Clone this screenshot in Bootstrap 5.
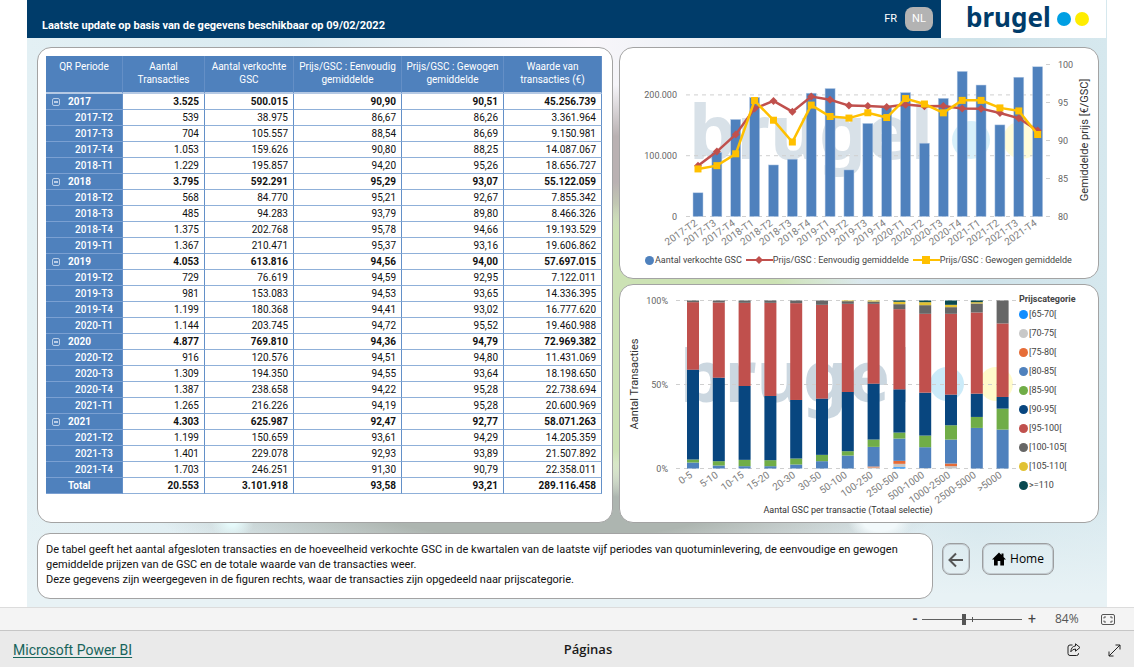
<!DOCTYPE html>
<html lang="nl">
<head>
<meta charset="utf-8">
<meta name="viewport" content="width=device-width, initial-scale=1">
<title>Brugel - GSC transacties</title>
<link rel="stylesheet" href="https://cdn.jsdelivr.net/npm/bootstrap@5.3.0/dist/css/bootstrap.min.css">
<style>
  :root { --navy: #003c6a; --steel: #4f81bd; --edge: #a3a3a3; }
  body { font-family: Roboto, "Open Sans", sans-serif; font-size: 10px; color: #222; background: #fff; }
  .report {
    margin: 0 27px;
    background:
      radial-gradient(ellipse 3% 3% at 79% 86%, #f2f9fb 50%, transparent 100%),
      radial-gradient(ellipse 2% 3% at 19% 86%, #e6fafb 20%, transparent 100%),
      radial-gradient(ellipse 24% 26% at 55% 56%, #cce2b4 70%, transparent 100%),
      radial-gradient(ellipse 12% 14% at 55% 28%, #b9b1b2 40%, transparent 100%),
      radial-gradient(ellipse 36% 9% at 48% 85%, #adb5b0 40%, transparent 100%),
      linear-gradient(to bottom, transparent 80%, #e8f2f5 98%),
      linear-gradient(to right, #e3f0f4, #d9eaf0 25%, #f8f6fa 52%, #cfe3ea 88%, #d6e8ee);
  }
  .topbar { background: var(--navy); height: 38px; padding-left: 15px; }
  .topbar h1 { font-size: 11px; line-height: 14px; margin: 14px 0 0; font-weight: 700; color: #fff; }
  .lang { color: #fff; font-size: 11px; line-height: 14px; text-decoration: none; }
  .lang-on { border: 0; background: #b3b3b3; color: #fff; font-size: 11px; line-height: 14px; border-radius: 8px; width: 28px; height: 24px; padding: 0; margin: 0 8px; }
  .brand-cell { width: 165px; height: 38px; background: #fff; margin-right: 1px; }
  .brand-cell svg { display: block; margin-left: 25px; overflow: visible; }
  .wordmark { font-family: "Noto Sans", sans-serif; font-weight: 700; fill: var(--navy); }
  .area { padding: 9px 8px 8px 10px; }
  .panels { display: grid; grid-template-columns: 6fr 5fr; gap: 6px; }
  .charts { display: flex; flex-direction: column; gap: 5px; min-width: 0; }
  .panel { background: #fff; border: 1px solid var(--edge); border-radius: 14px; }
  .panel svg { display: block; width: 100%; height: auto; }
  .table-panel { padding: 8px 10px 8px 8px; }

  .periods { width: 100%; table-layout: fixed; border-collapse: separate; border-spacing: 0; color: #111; }
  .periods th, .periods td { line-height: 15px; padding: 0 5px 0 0; text-align: right; border-bottom: 1px solid #8fb0d9; border-right: 1px solid #6390c8; white-space: nowrap; }
  .periods thead th { background: var(--steel); color: #fff; font-weight: 400; line-height: 13px; height: 38px; padding: 4px 0 0; text-align: center; vertical-align: top; border-right-color: #648fc6; border-bottom: 2px solid #b5c9e4; }
  .periods tbody th { background: var(--steel); color: #fff; font-weight: 500; padding-right: 9px; border-bottom-color: #7ba0d2; }
  .periods .year th, .periods .year td { font-weight: 700; }
  .periods .year th { text-align: left; padding-left: 6px; }
  .periods .total th { padding-left: 22px; }
  .fold { border: 1px solid #b9cde8; border-radius: 2px; background: transparent; width: 8px; height: 8px; padding: 0; margin-right: 8px; vertical-align: 0; position: relative; }
  .fold::after { content: ""; position: absolute; left: 1px; right: 1px; top: 2px; height: 2px; background: #b9cde8; }

  .tick { font-size: 9px; fill: #666; }
  .cat { font-size: 10px; fill: #7d7d7d; }
  .axis { font-size: 11px; fill: #333; }
  .axis-s { font-size: 9px; fill: #333; }
  .grid-line { stroke: #cfcfcf; stroke-dasharray: 4 4; }
  .key { font-size: 9px; line-height: 12px; color: #444; }
  .key svg { width: auto; flex: none; }
  .key-row { height: 24px; margin-bottom: 6px; padding-left: 25px; }
  .side-key { flex: 0 0 79px; padding-top: 8px; }
  .side-key h2 { font-size: 9px; line-height: 12px; font-weight: 700; color: #444; margin: 0; }
  .side-key li { line-height: 19px; }
  .dot { width: 9px; height: 9px; border-radius: 50%; margin-right: 1px; flex: none; }

  .note { font-size: 11px; line-height: 15px; color: #111; padding: 8px 8px 11px; border-radius: 13px; }
  .note p { margin: 0; }
  .bottom-row { margin-top: 10px; }
  .nav-btns { margin: 10px 45px 0 9px; gap: 12px; }
  .ghost { border: 1px solid #9c9ea0; box-shadow: inset 0 0 0 1px #c3cbd0; background: transparent; border-radius: 8px; height: 32px; padding: 0; font-family: "Open Sans", sans-serif; font-size: 12px; color: #000; }
  .back { width: 28px; } .home { width: 72px; }

  .zoombar { height: 24px; background: #f4f4f4; border-top: 1px solid #dcdcdc; border-bottom: 1px solid #c6c6c6; padding-right: 19px; color: #555; }
  .zoombar button { border: 0; background: none; padding: 0; width: 10px; font-size: 14px; line-height: 20px; color: #444; }
  .zoom-track { position: relative; width: 100px; height: 14px; margin: 0 5px 0 2px; }
  .zoom-track::after { content: ""; position: absolute; left: 50px; top: 5px; width: 1px; height: 5px; background: #555; }
  .zoom-track input { -webkit-appearance: none; appearance: none; display: block; width: 100%; height: 14px; margin: 0; background: linear-gradient(#606060, #606060) center / 100% 1px no-repeat; }
  .zoom-track input::-webkit-slider-thumb { -webkit-appearance: none; width: 4px; height: 11px; background: #555; border: 0; border-radius: 0; }
  .pct { font-family: "Open Sans", sans-serif; font-size: 12px; width: 23px; margin: 0 23px 0 18px; }
  .zoombar .fit { width: 14px; }
  .footbar { height: 36px; background: #eaeaea; padding: 2px 13px 0; }
  .footbar a { font-size: 14px; line-height: 18px; color: #17645b; text-decoration: underline; text-underline-offset: 2px; }
  .foot-start { flex: 1 1 42px; } .foot-end { flex: 1 1 0; gap: 27px; }
  .pages { font-family: "Open Sans", sans-serif; font-weight: 600; font-size: 13px; color: #1a1a1a; }
  .icon-btn { border: 0; background: none; padding: 0; line-height: 0; }
</style>
</head>
<body>
<main class="report">
  <header class="d-flex">
    <div class="topbar d-flex flex-fill align-items-center">
      <h1 class="me-auto">Laatste update op basis van de gegevens beschikbaar op 09/02/2022</h1>
      <a class="lang" href="#fr">FR</a>
      <button type="button" class="lang-on">NL</button>
    </div>
    <div class="brand-cell">
      <svg width="130" height="38" role="img" aria-label="brugel">
        <text class="wordmark" x="0" y="27" font-size="26">brugel</text>
        <circle cx="98" cy="19" r="7" fill="#009fe3"/><circle cx="116" cy="19" r="7" fill="#ffed00"/>
      </svg>
    </div>
  </header>

  <div class="area">
    <div class="panels">
      <section class="panel table-panel">
        <table class="periods">
          <colgroup><col style="width:77px"><col style="width:82px"><col style="width:89px"><col style="width:108px"><col style="width:102px"><col style="width:98px"></colgroup>
          <thead><tr>
            <th scope="col">QR Periode</th><th scope="col">Aantal<br>Transacties</th><th scope="col">Aantal verkochte<br>GSC</th>
            <th scope="col">Prijs/GSC : Eenvoudig<br>gemiddelde</th><th scope="col">Prijs/GSC : Gewogen<br>gemiddelde</th><th scope="col">Waarde van<br>transacties (€)</th>
          </tr></thead>
          <tbody id="rows"></tbody>
        </table>
      </section>

      <div class="charts">
        <section class="panel">
          <svg id="combo" viewBox="0 0 478 200" role="img" aria-label="Aantal verkochte GSC en gemiddelde prijs per kwartaal"></svg>
          <div class="key key-row d-flex align-items-center">
            <span class="dot" style="background:#4f81bd"></span><span class="me-1">Aantal verkochte GSC</span>
            <svg width="27" height="10"><path d="M0 5H27" stroke="#c0504d" stroke-width="2"/><path d="M13 1l4 4-4 4-4-4z" fill="#c0504d"/></svg><span class="me-1">Prijs/GSC : Eenvoudig gemiddelde</span>
            <svg width="27" height="10"><path d="M0 5H27" stroke="#ffc000" stroke-width="2"/><path d="M9 1h8v8h-8z" fill="#ffc000"/></svg><span>Prijs/GSC : Gewogen gemiddelde</span>
          </div>
        </section>
        <section class="panel d-flex">
          <div class="flex-fill"><svg id="stack" viewBox="0 0 399 237" role="img" aria-label="Aantal transacties per prijscategorie"></svg></div>
          <div class="key side-key">
            <h2>Prijscategorie</h2>
            <ul id="cats" class="list-unstyled m-0"></ul>
          </div>
        </section>
      </div>
    </div>

    <div class="bottom-row d-flex align-items-start">
      <section class="panel note flex-fill">
        <p>De tabel geeft het aantal afgesloten transacties en de hoeveelheid verkochte GSC in de kwartalen van de laatste vijf periodes van quotuminlevering, de eenvoudige en gewogen<br>gemiddelde prijzen van de GSC en de totale waarde van de transacties weer.</p>
        <p>Deze gegevens zijn weergegeven in de figuren rechts, waar de transacties zijn opgedeeld naar prijscategorie.</p>
      </section>
      <div class="nav-btns d-flex">
        <button type="button" class="ghost back" aria-label="Terug"><svg width="16" height="16" fill="none" stroke="#555" stroke-width="2"><path d="M15 8H2M8 1.500L1.500 8 8 14.500"/></svg></button>
        <button type="button" class="ghost home d-flex align-items-center justify-content-center"><svg class="me-1" width="14" height="14"><path d="M7 .5L0 7.500h2V13.500h3.700V9h2.600v4.500H12V7.500h2L11.500 5V1.500h-2V3z"/></svg>Home</button>
      </div>
    </div>
  </div>
</main>

<div class="zoombar d-flex align-items-center justify-content-end">
  <button type="button" aria-label="Uitzoomen"><b>-</b></button>
  <div class="zoom-track"><input type="range" min="0" max="100" value="42" aria-label="Zoom"></div>
  <button type="button" aria-label="Inzoomen">+</button>
  <span class="pct">84%</span>
  <button type="button" class="icon-btn fit" aria-label="Passend"><svg width="14" height="12" fill="none" stroke="#555"><rect x=".5" y=".5" width="13" height="10" rx="1.500"/><path d="M3 4.500V3h2M9 3h2v1.500M11 6.500V8H9M5 8H3V6.500"/></svg></button>
</div>
<footer class="footbar d-flex align-items-center">
  <div class="foot-start"><a href="#powerbi">Microsoft Power BI</a></div>
  <span class="pages">Páginas</span>
  <div class="foot-end d-flex justify-content-end align-items-center">
    <button type="button" class="icon-btn" aria-label="Delen"><svg width="14" height="14" fill="none" stroke="#222" stroke-linejoin="round"><path d="M5.500 2H3Q1 2 1 4v6.500q0 2 2 2h6.500q2 0 2-2V10"/><path d="M8.500.8L13 4.500 8.500 8.200V6Q5.500 6 3.800 8.800 4.200 3.200 8.500 3z"/></svg></button>
    <button type="button" class="icon-btn" aria-label="Volledig scherm"><svg width="13" height="13" fill="none" stroke="#222"><path d="M1 12L12 1M7.500 1H12v4.500M1 7.500V12h4.500"/></svg></button>
  </div>
</footer>

<script src="https://cdn.jsdelivr.net/npm/bootstrap@5.3.0/dist/js/bootstrap.bundle.min.js"></script>
<script>
  // period | transactions | GSC sold | simple average | weighted average | value
  const data = `2017|3.525|500.015|90,90|90,51|45.256.739
2017-T2|539|38.975|86,67|86,26|3.361.964
2017-T3|704|105.557|88,54|86,69|9.150.981
2017-T4|1.053|159.626|90,80|88,25|14.087.067
2018-T1|1.229|195.857|94,20|95,26|18.656.727
2018|3.795|592.291|95,29|93,07|55.122.059
2018-T2|568|84.770|95,21|92,67|7.855.342
2018-T3|485|94.283|93,79|89,80|8.466.326
2018-T4|1.375|202.768|95,78|94,66|19.193.529
2019-T1|1.367|210.471|95,37|93,16|19.606.862
2019|4.053|613.816|94,56|94,00|57.697.015
2019-T2|729|76.619|94,59|92,95|7.122.011
2019-T3|981|153.083|94,53|93,65|14.336.395
2019-T4|1.199|180.368|94,41|93,02|16.777.620
2020-T1|1.144|203.745|94,72|95,52|19.460.988
2020|4.877|769.810|94,36|94,79|72.969.382
2020-T2|916|120.576|94,51|94,80|11.431.069
2020-T3|1.309|194.350|94,55|93,64|18.198.650
2020-T4|1.387|238.658|94,22|95,28|22.738.694
2021-T1|1.265|216.226|94,19|95,28|20.600.969
2021|4.303|625.987|92,47|92,77|58.071.263
2021-T2|1.199|150.659|93,61|94,29|14.205.359
2021-T3|1.401|229.078|92,93|93,89|21.507.892
2021-T4|1.703|246.251|91,30|90,79|22.358.011
Total|20.553|3.101.918|93,58|93,21|289.116.458`.split('\n').map(r => r.split('|'));

  document.getElementById('rows').innerHTML = data.map(([p, ...v]) => {
    const quarter = p.includes('-T'), total = p === 'Total';
    const fold = quarter || total ? '' : `<button type="button" class="fold" aria-label="${p} inklappen"></button>`;
    return `<tr class="${quarter ? '' : 'year'}${total ? ' total' : ''}"><th scope="row">${fold}${p}</th>${v.map(x => `<td>${x}</td>`).join('')}</tr>`;
  }).join('');

  const watermark = (x, y, size, r, c1, c2, cy, o) =>
    `<g opacity="${o}"><text class="wordmark" x="${x}" y="${y}" font-size="${size}">brugel</text>` +
    `<circle cx="${c1}" cy="${cy}" r="${r}" fill="#009fe3"/><circle cx="${c2}" cy="${cy}" r="${r}" fill="#ffed00"/></g>`;

  // Combined bar and line chart
  const num = s => parseFloat(s.replace(/\./g, '').replace(',', '.'));
  const quarters = data.filter(r => r[0].includes('-T'));
  const base = 168.5, left = 78, step = 18.87;
  const yBar = v => base - v / 100000 * 60.8, yPrice = v => base - (v - 80) * 7.6;
  let s = watermark(69, 111, 75, 19, 351, 402, 92, 0.15);
  [0, 1, 2].forEach(k => {
    const y = yBar(k * 100000);
    s += `<line class="grid-line" x1="66" x2="430" y1="${y}" y2="${y}"/><text class="tick" x="57" y="${y + 3}" text-anchor="end">${k ? k + '00.000' : 0}</text>`;
  });
  [80, 85, 90, 95, 100].forEach(v => {
    const y = yPrice(v);
    s += `<path d="M426 ${y}h4" stroke="#cfcfcf"/><text class="tick" x="438" y="${y + 3}">${v}</text>`;
  });
  const pts = col => quarters.map((r, i) => [left + i * step, yPrice(num(r[col]))]);
  quarters.forEach((r, i) => {
    const x = left + i * step, y = yBar(num(r[2]));
    s += `<rect x="${x - 5}" y="${y}" width="10" height="${base - y}" fill="#4f81bd" stroke="#b8cce6" stroke-width=".5"/>`;
    s += `<text class="cat" text-anchor="end" transform="translate(${x} ${base + 8}) rotate(-35)">${r[0]}</text>`;
  });
  const line = (p, c) => `<polyline points="${p.join(' ')}" fill="none" stroke="${c}" stroke-width="2.500"/>`;
  const simple = pts(3), weighted = pts(4);
  s += line(simple, '#c0504d') + simple.map(([x, y]) => `<path d="M${x} ${y - 4}l4 4-4 4-4-4z" fill="#c0504d"/>`).join('');
  s += line(weighted, '#ffc000') + weighted.map(([x, y]) => `<rect x="${x - 3.5}" y="${y - 3.5}" width="7" height="7" fill="#ffc000"/>`).join('');
  s += `<text class="axis" text-anchor="middle" transform="translate(468 92) rotate(-90)">Gemiddelde prijs [€/GSC]</text>`;
  document.getElementById('combo').innerHTML = s;

  // Stacked share per transaction size, bottom category first
  const cats = [['[65-70[', '#118dff'], ['[70-75[', '#c8c8c8'], ['[75-80[', '#e66c37'], ['[80-85[', '#4f81bd'], ['[85-90[', '#70ad47'],
    ['[90-95[', '#08467f'], ['[95-100[', '#c0504d'], ['[100-105[', '#666666'], ['[105-110[', '#e1c233'], ['>=110', '#0b4a50']];
  const shares = [
    ['0-5', 0, 0, 0, 18, 9, 270, 203, 5, 0, 0], ['5-10', 0, 0, 0, 9, 13, 251, 226, 6, 0, 0],
    ['10-15', 0, 0, 0, 7, 19, 222, 250, 7, 0, 0], ['15-20', 0, 0, 0, 7, 18, 193, 280, 7, 0, 0],
    ['20-30', 0, 0, 0, 12, 18, 176, 291, 8, 0, 0], ['30-50', 0, 0, 0, 22, 19, 169, 282, 13, 0, 0],
    ['50-100', 0, 0, 0, 39, 13, 178, 265, 8, 2, 0], ['100-250', 0, 3, 3, 59, 22, 168, 240, 7, 3, 0],
    ['250-500', 4, 10, 9, 67, 18, 130, 241, 15, 7, 4], ['500-1000', 0, 1, 0, 63, 35, 129, 237, 26, 9, 5],
    ['1000-2500', 0, 7, 8, 72, 43, 92, 243, 20, 7, 13], ['2500-5000', 0, 0, 0, 122, 33, 70, 244, 27, 4, 5],
    ['>5000', 0, 0, 0, 117, 63, 35, 221, 69, 0, 0]];
  const floor = 183.5;
  let t = watermark(60, 117, 71, 17, 327, 376, 99, 0.2);
  [0, 50, 100].forEach(v => {
    const y = floor - v * 1.68;
    t += `<line class="grid-line" x1="56" x2="398" y1="${y}" y2="${y}"/><text class="tick" x="48" y="${y + 3}" text-anchor="end">${v}%</text>`;
  });
  shares.forEach(([name, ...v], i) => {
    const x = 73 + i * 25.8, sum = v.reduce((a, b) => a + b);
    let y = floor;
    v.forEach((n, k) => {
      const h = n / sum * 168;
      y -= h;
      if (n) t += `<rect x="${x - 6}" y="${y}" width="12" height="${h}" fill="${cats[k][1]}"/>`;
    });
    t += `<text class="cat" text-anchor="end" transform="translate(${x} ${floor + 8}) rotate(-35)">${name}</text>`;
  });
  t += `<text class="axis" text-anchor="middle" transform="translate(18 99) rotate(-90)">Aantal Transacties</text>`;
  t += `<text class="axis-s" text-anchor="middle" x="228" y="228">Aantal GSC per transactie (Totaal selectie)</text>`;
  document.getElementById('stack').innerHTML = t;
  document.getElementById('cats').innerHTML = cats.map(([n, c]) =>
    `<li class="d-flex align-items-center"><span class="dot" style="background:${c}"></span>${n.replace('>', '&gt;')}</li>`).join('');
</script>
</body>
</html>
